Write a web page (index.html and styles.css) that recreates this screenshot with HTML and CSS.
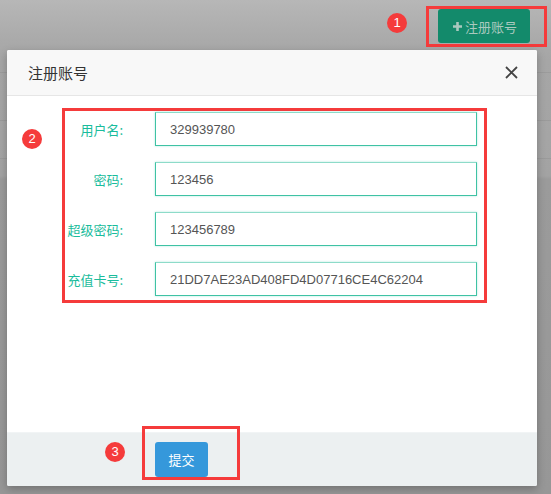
FILE: index.html
```html
<!DOCTYPE html>
<html lang="zh">
<head>
<meta charset="utf-8">
<title>注册账号</title>
<link rel="stylesheet" href="styles.css">
</head>
<body>
<div class="page">
  <div class="topbar">
    <div class="hl hl-top">
      <button class="btn-green"><svg class="plus" width="9" height="9" viewBox="0 0 9 9"><path d="M3.2 0h2.6v3.2H9v2.6H5.8V9H3.2V5.8H0V3.2h3.2z" fill="currentColor"/></svg>注册账号</button>
    </div>
  </div>
  <div class="bg-row r1"></div>
  <div class="bg-row r2"></div>
  <div class="bg-row r3"></div>

  <div class="modal">
    <div class="modal-header">
      <span class="modal-title">注册账号</span>
      <svg class="close" width="13" height="13" viewBox="0 0 13 13"><path d="M1 1L12 12M12 1L1 12" stroke="#444" stroke-width="1.8" fill="none"/></svg>
    </div>
    <div class="modal-body">
      <div class="hl hl-form">
        <div class="form">
          <label class="lbl">用户名:</label><div class="field">329939780</div>
          <label class="lbl">密码:</label><div class="field">123456</div>
          <label class="lbl">超级密码:</label><div class="field">123456789</div>
          <label class="lbl">充值卡号:</label><div class="field">21DD7AE23AD408FD4D07716CE4C62204</div>
        </div>
      </div>
    </div>
    <div class="modal-footer">
      <button class="btn-blue">提交</button>
    </div>
    <div class="hl hl-submit"></div>
  </div>

  <span class="badge b1">1</span>
  <span class="badge b2">2</span>
  <span class="badge b3">3</span>
</div>
</body>
</html>
```

FILE: styles.css
```css
html, body {
  margin: 0;
  padding: 0;
}
.page {
  position: relative;
  width: 551px;
  height: 494px;
  overflow: hidden;
  font-family: "Noto Sans CJK SC", "Liberation Sans", sans-serif;
  background: linear-gradient(to bottom, #b7b7b7 0px, #aaaaaa 40px, #a6a6a6 60px, #a3a3a3 176px, #9b9b9b 179px, #979797 494px);
}
.topbar {
  height: 50px;
  box-sizing: border-box;
  padding: 6px 4px 0 0;
  display: flex;
  justify-content: flex-end;
  align-items: flex-start;
}
.hl {
  border: 3px solid #f53b3b;
  box-sizing: border-box;
}
.hl-top {
  height: 41px;
  padding: 0 14px 0 9px;
}
.btn-green {
  width: 92px;
  height: 34px;
  border: none;
  border-radius: 3px;
  background: #138a6b;
  color: #a9c9bf;
  font-family: "Noto Sans CJK SC", sans-serif;
  font-size: 13px;
  display: flex;
  align-items: center;
  justify-content: center;
  gap: 3px;
  padding: 0 0 0 2px;
}
.plus {
  display: block;
}
.bg-row {
  border-bottom: 1px solid rgba(0, 0, 0, 0.06);
}
.r1 { height: 22px; }
.r2 { height: 47px; }
.r3 { height: 37px; background: rgba(255, 255, 255, 0.02); }

.modal {
  position: absolute;
  left: 7px;
  top: 50px;
  width: 530px;
  height: 436px;
  background: #fff;
  border-radius: 2px;
  box-shadow: 0 3px 9px rgba(0, 0, 0, 0.25);
  display: flex;
  flex-direction: column;
}
.modal-header {
  height: 46px;
  box-sizing: border-box;
  background: #f8f8f8;
  border-bottom: 1px solid #e6e6e6;
  border-radius: 2px 2px 0 0;
  display: flex;
  align-items: center;
  justify-content: space-between;
  padding: 0 19px 0 21px;
}
.modal-title {
  font-size: 15px;
  color: #333;
}
.close {
  display: block;
}
.modal-body {
  flex: 1;
  padding: 12px 0 0 55px;
}
.hl-form {
  width: 425px;
  padding: 1px 7px 4px 0;
}
.form {
  display: grid;
  grid-template-columns: 58px 322px;
  column-gap: 32px;
  row-gap: 16px;
}
.lbl {
  font-size: 13px;
  color: #1abc9c;
  white-space: nowrap;
  align-self: center;
  justify-self: end;
}
.field {
  height: 34px;
  box-sizing: border-box;
  border: 1px solid #3fc2a4;
  border-top-color: #8ddbc9;
  box-shadow: 0 0 2px rgba(26, 188, 156, 0.35);
  padding: 0 14px;
  display: flex;
  align-items: center;
  font-family: "Liberation Sans", Arial, sans-serif;
  font-size: 13px;
  color: #555;
}
.modal-footer {
  height: 54px;
  box-sizing: border-box;
  background: #ecf0f1;
  border-top: 1px solid #f1f4f5;
  padding: 9px 0 0 148px;
  border-radius: 0 0 2px 2px;
}
.btn-blue {
  width: 53px;
  height: 35px;
  border: none;
  border-radius: 3px;
  background: #3598db;
  color: #fff;
  font-family: "Noto Sans CJK SC", sans-serif;
  font-size: 13px;
  padding: 0;
}
.hl-submit {
  position: absolute;
  left: 135px;
  top: 376px;
  width: 98px;
  height: 54px;
}
.badge {
  position: absolute;
  width: 20px;
  height: 20px;
  border-radius: 50%;
  background: #f53b3b;
  color: #fff;
  font-family: "Liberation Sans", Arial, sans-serif;
  font-size: 13px;
  line-height: 20px;
  text-align: center;
}
.b1 { left: 387px; top: 13px; }
.b2 { left: 22px; top: 129px; }
.b3 { left: 105px; top: 442px; }
```
